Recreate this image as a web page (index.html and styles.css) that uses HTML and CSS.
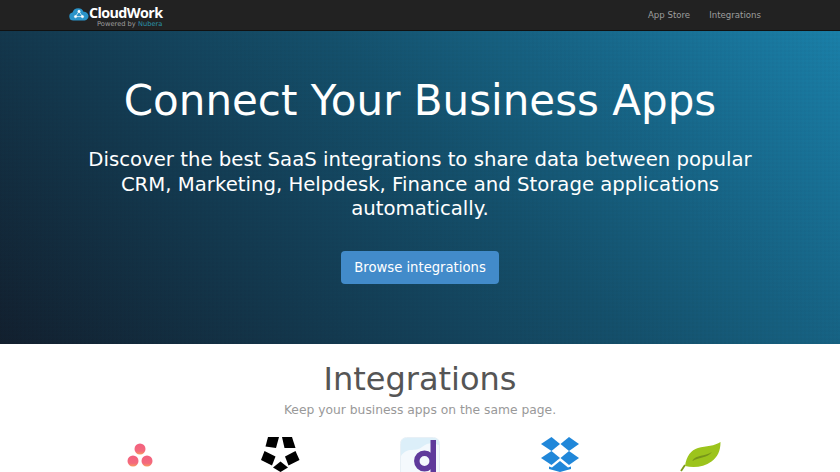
FILE: index.html
```html
<!DOCTYPE html>
<html lang="en">
  <head>
    <meta charset="UTF-8" />
    <meta name="viewport" content="width=device-width, initial-scale=1.0" />
    <title>CloudWork - Connect Your Business Apps</title>
    <link rel="stylesheet" href="styles.css">
  </head>
  <body>
    <nav class="navbar">
      <a class="brand" href="#">
        <svg class="brand-icon" width="20" height="14" viewBox="0 0 23 15">
          <path fill="#2a93c9" d="M5 15a4.600 4.600 0 0 1-1-9.100A7 7 0 0 1 10.500 1a6.600 6.600 0 0 1 6.200 4 5 5 0 0 1 1.300 10z"/>
          <g stroke="#fff" stroke-width="0.8" fill="#fff">
            <path d="M11.500 4.500L7.500 10.500L15.500 10.500z" fill="none"/>
            <circle cx="11.500" cy="4.500" r="1.300"/>
            <circle cx="7.500" cy="10.500" r="1.300"/>
            <circle cx="15.500" cy="10.500" r="1.300"/>
          </g>
        </svg>
        <span class="brand-text">
          <span class="brand-name">CloudWork</span>
          <span class="brand-sub">Powered by <span class="brand-nubera">Nubera</span></span>
        </span>
      </a>
      <div class="nav-links">
        <a href="#">App Store</a>
        <a href="#">Integrations</a>
      </div>
    </nav>

    <header class="hero">
      <h1>Connect Your Business Apps</h1>
      <p>Discover the best SaaS integrations to share data between popular CRM, Marketing, Helpdesk, Finance and Storage applications automatically.</p>
      <a class="btn" href="#">Browse integrations</a>
    </header>

    <section class="integrations">
      <h2>Integrations</h2>
      <p class="lead">Keep your business apps on the same page.</p>
      <div class="logos">
        <div class="logo">
          <svg class="logo-asana" width="26" height="26" viewBox="0 0 26 26">
            <defs>
              <linearGradient id="asana" x1="0" y1="0" x2="0" y2="1">
                <stop offset="0" stop-color="#f2607f"/>
                <stop offset="0.7" stop-color="#f46a7c"/>
                <stop offset="1" stop-color="#f89a5e"/>
              </linearGradient>
            </defs>
            <circle cx="13" cy="6" r="5.500" fill="url(#asana)"/>
            <circle cx="6" cy="18" r="5.500" fill="url(#asana)"/>
            <circle cx="20" cy="18" r="5.500" fill="url(#asana)"/>
          </svg>
        </div>
        <div class="logo">
          <svg width="39" height="35" viewBox="0 0 39 35">
            <path d="M7 0h11l-3 11-10.500-1.500z"/>
            <path d="M21 0h10l3.500 11h-11z"/>
            <path d="M3.500 14l11 5.500-3.500 9L0 23z"/>
            <path d="M34.500 14l4 9-11 5.500-3.500-9z"/>
            <path d="M19.500 24.500l7.500 6-7.500 4.500-7.500-4.500z"/>
          </svg>
        </div>
        <div class="logo">
          <svg width="40" height="36" viewBox="0 0 40 36">
            <rect x="0.500" y="0.500" width="39" height="44" rx="6" fill="#f4f9fd" stroke="#e8f0f6"/>
            <path d="M1 19C8 9 14 16 22 10s12-3 17-2V6a5 5 0 0 0-5-5H6a5 5 0 0 0-5 5z" fill="#dceff9"/>
            <circle cx="24.500" cy="24" r="7.700" fill="none" stroke="#5f3a9b" stroke-width="5.500"/>
            <rect x="30.500" y="3" width="5.500" height="33" fill="#5f3a9b"/>
          </svg>
        </div>
        <div class="logo">
          <svg width="38" height="35" viewBox="0 0 38 35" fill="#2087d9">
            <path d="M10.500 0l8.500 7-8.500 7L0 7z"/>
            <path d="M28 0l10 7-10 7-8.500-7z"/>
            <path d="M10.500 14l8.500 7-8.500 7L0 21z"/>
            <path d="M28 14l10 7-10 7-8.500-7z"/>
            <path d="M19 24l8 6.500 3-1v2.500L19 35 8 32v-2.500l3 1z"/>
          </svg>
        </div>
        <div class="logo">
          <svg class="logo-leaf" width="41" height="30" viewBox="0 0 41 30">
            <path d="M1 29l4-6" stroke="#7d9a1a" stroke-width="1.800" fill="none"/>
            <path d="M5 24C6.500 14 11 8 18 6c8-2 17-2 22.500-6 0 9-3 15-9 19.500C24 25 14 26 5 24z" fill="#9cc41c"/>
            <path d="M12 19c5-7 12-4 20-9-5 6-12 5-20 9z" fill="#76951a"/>
          </svg>
        </div>
      </div>
    </section>
  </body>
</html>
```

FILE: styles.css
```css
html,
body {
  height: 472px;
  overflow: hidden;
}
body {
  font-family: "DejaVu Sans", sans-serif;
  margin: 0;
  background-color: white;
}
a {
  text-decoration: none;
}
.navbar {
  display: flex;
  justify-content: space-between;
  align-items: center;
  height: 30px;
  padding: 0 79px 0 69px;
  background-color: #222222;
  border-bottom: 1px solid #111111;
}
.brand {
  display: flex;
  align-items: flex-start;
  height: 30px;
  padding-top: 5px;
  box-sizing: border-box;
}
.brand-icon {
  margin-top: 2px;
}
.brand-text {
  display: flex;
  flex-direction: column;
  align-items: flex-end;
}
.brand-name {
  font-family: "Open Sans", sans-serif;
  font-size: 14.300px;
  font-weight: 700;
  line-height: 16px;
  letter-spacing: -0.6px;
  color: white;
}
.brand-sub {
  font-size: 6.700px;
  line-height: 7px;
  color: #9d9d9d;
}
.brand-nubera {
  color: #2a93a9;
}
.nav-links {
  display: flex;
  gap: 19px;
}
.nav-links a {
  font-size: 8.600px;
  color: #9d9d9d;
}
.hero {
  height: 313px;
  box-sizing: border-box;
  padding-top: 42px;
  text-align: center;
  color: white;
  background-color: #14506c;
  background-image:
    repeating-linear-gradient(0deg, rgba(0, 0, 0, 0.015) 0 2px, transparent 2px 4px),
    repeating-linear-gradient(90deg, rgba(0, 0, 0, 0.015) 0 2px, transparent 2px 4px),
    linear-gradient(45deg, #12202f 0%, #14506c 55%, #1a80a9 100%);
}
.hero h1 {
  margin: 0;
  font-size: 42px;
  font-weight: 400;
  line-height: 56px;
}
.hero p {
  width: 680px;
  margin: 19px auto 0;
  font-size: 19.700px;
  line-height: 24.500px;
}
.btn {
  display: inline-block;
  box-sizing: border-box;
  width: 158px;
  height: 33px;
  margin-top: 29px;
  font-size: 13.200px;
  line-height: 33px;
  color: white;
  background-color: #428bca;
  border-radius: 4px;
}
.integrations {
  text-align: center;
}
.integrations h2 {
  margin: 0;
  padding-top: 14px;
  font-size: 32px;
  font-weight: 400;
  line-height: 43px;
  color: #555555;
}
.lead {
  margin: 1px 0 0;
  font-size: 12.300px;
  line-height: 16px;
  color: #999999;
}
.logos {
  display: grid;
  grid-template-columns: repeat(5, 140px);
  justify-content: center;
  margin-top: 19px;
}
.logo {
  display: flex;
  justify-content: center;
  align-items: flex-start;
  height: 36px;
  overflow: hidden;
}
.logo-asana {
  margin-top: 6px;
}
.logo-leaf {
  margin-top: 5px;
}
```
